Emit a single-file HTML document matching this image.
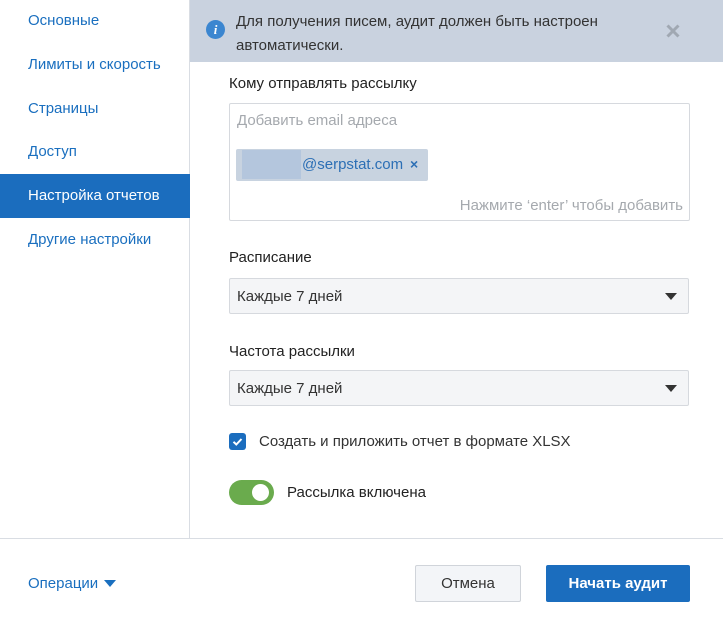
<!DOCTYPE html>
<html><head><meta charset="utf-8"><style>
*{box-sizing:border-box;margin:0;padding:0}
body{width:723px;height:620px;background:#fff;font-family:"Liberation Sans",Arial,sans-serif;position:relative;overflow:hidden;color:#333}
.a{position:absolute}
.side{left:0;top:0;width:190px;height:538px;border-right:1px solid #d9dde3}
.item{position:absolute;left:0;width:190px;height:44px;line-height:44px;padding-left:28px;font-size:15px;color:#1a6fbf}
.item.on{background:#1b6dbe;color:#fff}
.banner{left:190px;top:0;width:533px;height:62px;background:#c9d2df}
.lbl{font-size:15px;color:#222}
.sel{left:229px;width:460px;height:36px;border:1px solid #d6d9de;background:#f4f5f7;border-radius:2px;font-size:15px;line-height:36px;padding-left:7px;color:#333}
.sel:after{content:"";position:absolute;right:11px;top:14px;border-left:6px solid transparent;border-right:6px solid transparent;border-top:7px solid #333}
</style></head><body>
<div class="a side">
<div class="item" style="top:-1px">Основные</div>
<div class="item" style="top:43px">Лимиты и скорость</div>
<div class="item" style="top:87px">Страницы</div>
<div class="item" style="top:130px">Доступ</div>
<div class="item on" style="top:174px">Настройка отчетов</div>
<div class="item" style="top:218px">Другие настройки</div>
</div>
<div class="a banner">
<div class="a" style="left:16px;top:20px;width:19px;height:19px;border-radius:50%;background:#3b86d0;color:#fff;font:italic bold 13px 'Liberation Serif',serif;text-align:center;line-height:19px">i</div>
<div class="a" style="left:46px;top:10px;font-size:15px;line-height:24px;color:#333">Для получения писем, аудит должен быть настроен<br>автоматически.</div>
<svg class="a" style="left:476px;top:24px" width="14" height="14"><path d="M1.5 1.5l11 11M12.5 1.5l-11 11" stroke="#a0a8b2" stroke-width="3"/></svg>
</div>
<div class="a lbl" style="left:229px;top:75px">Кому отправлять рассылку</div>
<div class="a" style="left:229px;top:103px;width:461px;height:118px;border:1px solid #d6d9de;border-radius:2px">
<div class="a" style="left:7px;top:8px;font-size:15px;color:#a5a9ae">Добавить email адреса</div>
<div class="a" style="left:6px;top:45px;width:192px;height:32px;background:#c8d3e0;border-radius:2px">
<div class="a" style="left:6px;top:1px;width:59px;height:29px;background:#b4c6dd"></div>
<div class="a" style="left:66px;top:7px;font-size:15px;color:#2c6fb5">@serpstat.com</div>
<div class="a" style="left:174px;top:7px;font-size:14px;font-weight:bold;color:#2c6fb5">×</div>
</div>
<div class="a" style="right:6px;top:93px;font-size:15px;color:#a5a9ae">Нажмите ‘enter’ чтобы добавить</div>
</div>
<div class="a lbl" style="left:229px;top:249px">Расписание</div>
<div class="a sel" style="top:278px">Каждые 7 дней</div>
<div class="a lbl" style="left:229px;top:343px">Частота рассылки</div>
<div class="a sel" style="top:370px">Каждые 7 дней</div>
<div class="a" style="left:229px;top:433px;width:17px;height:17px;border-radius:3px;background:#1b6dbe">
<svg width="17" height="17"><path d="M4.5 8.8l2.8 2.7 5.2-5.5" stroke="#fff" stroke-width="2" fill="none"/></svg></div>
<div class="a" style="left:259px;top:433px;font-size:15px;color:#333">Создать и приложить отчет в формате XLSX</div>
<div class="a" style="left:229px;top:480px;width:45px;height:25px;border-radius:13px;background:#6aab4d">
<div class="a" style="left:23px;top:4px;width:17px;height:17px;border-radius:50%;background:#fff"></div></div>
<div class="a" style="left:287px;top:484px;font-size:15px;color:#222">Рассылка включена</div>
<div class="a" style="left:0;top:538px;width:723px;height:1px;background:#d9dde3"></div>
<div class="a" style="left:28px;top:575px;font-size:15px;color:#1a6fbf">Операции</div>
<div class="a" style="left:104px;top:580px;border-left:6px solid transparent;border-right:6px solid transparent;border-top:7px solid #1a6fbf"></div>
<div class="a" style="left:415px;top:565px;width:106px;height:37px;border:1px solid #d0d4da;border-radius:2px;background:#f3f5f8;text-align:center;line-height:35px;font-size:15px;color:#333">Отмена</div>
<div class="a" style="left:546px;top:565px;width:144px;height:37px;border-radius:2px;background:#1b6dbe;text-align:center;line-height:37px;font-size:15px;font-weight:bold;color:#fff">Начать аудит</div>
</body></html>
